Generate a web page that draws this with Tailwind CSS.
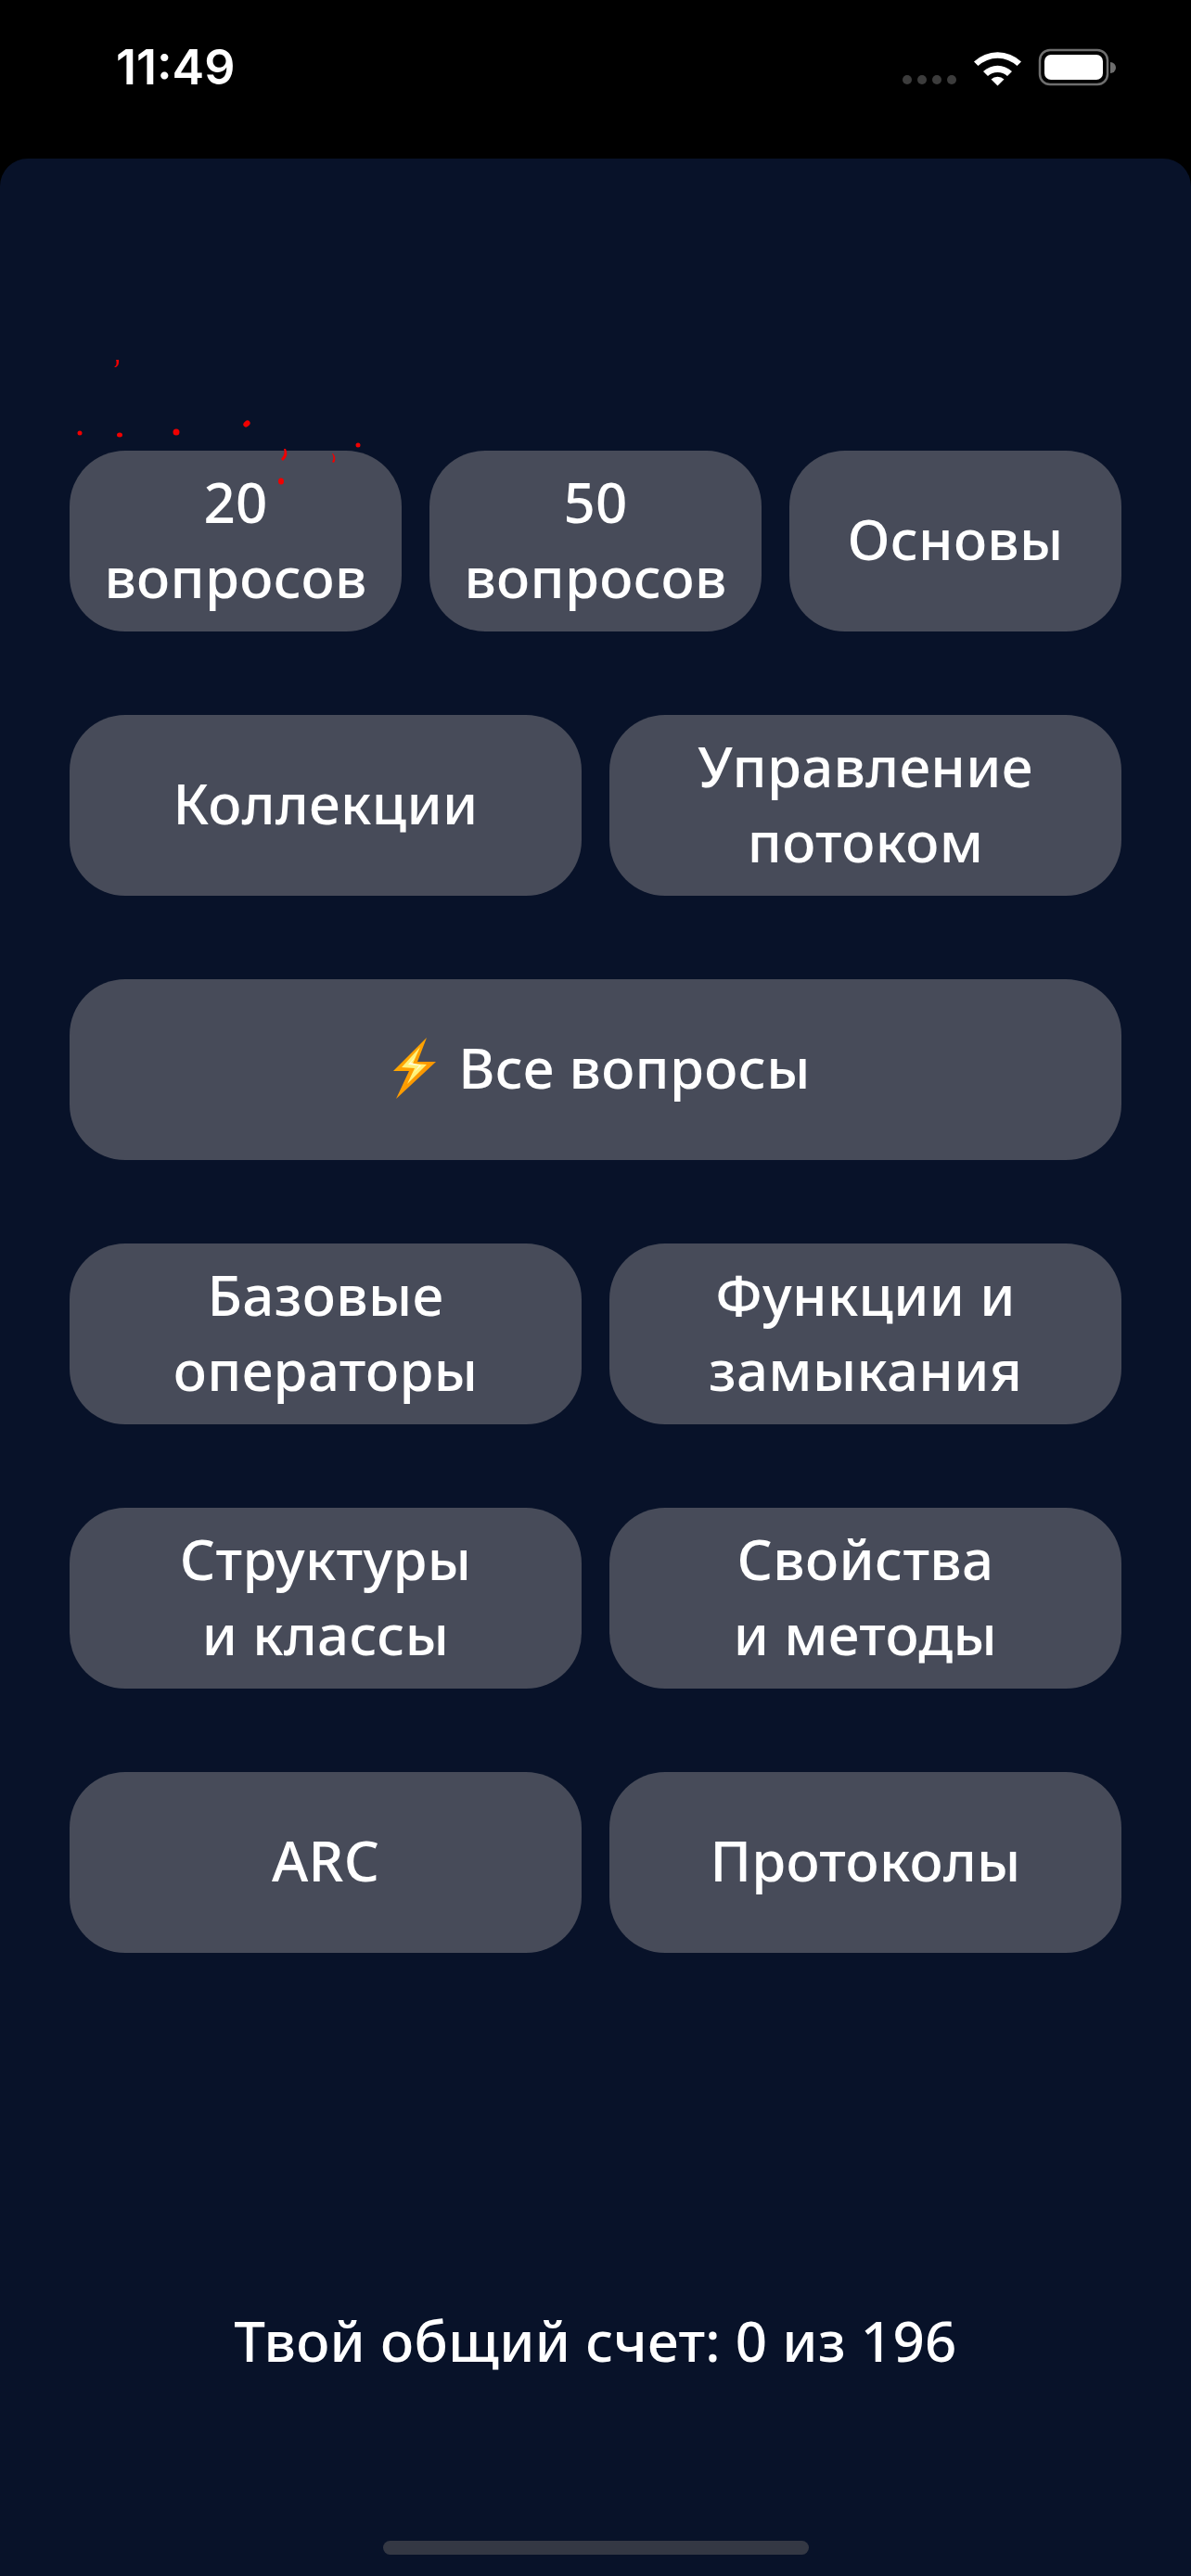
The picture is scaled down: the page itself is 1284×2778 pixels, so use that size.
<!DOCTYPE html>
<html lang="ru">
<head>
    <meta charset="UTF-8">
    <meta name="viewport" content="width=device-width, initial-scale=1.0">
    <title>Викторина</title>
    <script src="https://cdn.jsdelivr.net/npm/@tailwindcss/browser@4"></script>
</head>
<body class="bg-black font-['Noto_Sans',sans-serif] text-white">
<div class="relative w-[1284px] h-[2778px] flex flex-col overflow-hidden">

    <!-- status bar -->
    <div class="h-[171px] shrink-0 relative">
        <div class="absolute left-[125px] top-[43px] text-[52px] leading-[60px] font-semibold font-['Inter',sans-serif]">11:49</div>
        <svg class="absolute left-[970px] top-[50px]" width="240" height="46" viewBox="970 50 240 46">
            <circle cx="978" cy="86" r="5" fill="#3c3c3c"/>
            <circle cx="994" cy="86" r="5" fill="#3c3c3c"/>
            <circle cx="1010" cy="86" r="5" fill="#3c3c3c"/>
            <circle cx="1026" cy="86" r="5" fill="#3c3c3c"/>
            <path d="M1050 66.500 A37 37 0 0 1 1101 66.500 L1096.500 71 A31 31 0 0 0 1054.500 71Z" fill="#fff"/>
            <path d="M1060 77 A22.500 22.500 0 0 1 1091 77 L1086 82 A15.500 15.500 0 0 0 1065 82Z" fill="#fff"/>
            <path d="M1068.500 85.500 A10 10 0 0 1 1082.500 85.500 L1075.500 92.500Z" fill="#fff"/>
            <rect x="1121" y="54" width="73" height="37" rx="11" fill="none" stroke="#6e6e6e" stroke-width="2.500"/>
            <rect x="1126" y="59" width="63" height="27" rx="7" fill="#fff"/>
            <path d="M1197 67 A6 6 0 0 1 1197 79Z" fill="#6e6e6e"/>
        </svg>
    </div>

    <!-- main panel -->
    <div class="flex-1 bg-[#081229] rounded-t-[30px] px-[75px] pt-[315px] flex flex-col items-stretch">
        <div class="flex flex-col gap-[90px] text-[60px] leading-[81px] font-medium tracking-[0.3px] text-center">
            <div class="grid grid-cols-3 gap-[30px]">
                <button class="h-[195px] pb-1 rounded-[60px] bg-[#474b59]">20<br>вопросов</button>
                <button class="h-[195px] pb-1 rounded-[60px] bg-[#474b59]">50<br>вопросов</button>
                <button class="h-[195px] pb-1 rounded-[60px] bg-[#474b59]">Основы</button>
            </div>
            <div class="grid grid-cols-2 gap-[30px]">
                <button class="h-[195px] pb-1 rounded-[60px] bg-[#474b59]">Коллекции</button>
                <button class="h-[195px] pb-1 rounded-[60px] bg-[#474b59]">Управление<br>потоком</button>
            </div>
            <button class="h-[195px] pb-1 pl-[14px] rounded-[60px] bg-[#474b59] flex items-center justify-center gap-[24px]">
                <svg width="46" height="66" viewBox="0 0 46 66">
                    <defs>
                        <linearGradient id="bolt" x1="0" y1="0" x2="1" y2="1">
                            <stop offset="0" stop-color="#ffb300"/>
                            <stop offset="0.5" stop-color="#ff9d00"/>
                            <stop offset="1" stop-color="#f08a00"/>
                        </linearGradient>
                    </defs>
                    <path d="M36 0 L0 36 L17 36 L3 66 L46 26 L26 26Z" fill="url(#bolt)"/>
                    <path d="M29 10 L9 32 L23 33 L15 50 L36 29 L21 28Z" fill="#fff27a"/>
                    <path d="M24 20 L16 29 L28 30 L22 38 L30 30 L19 27Z" fill="#fffde0"/>
                </svg>
                <span>Все вопросы</span>
            </button>
            <div class="grid grid-cols-2 gap-[30px]">
                <button class="h-[195px] pb-1 rounded-[60px] bg-[#474b59]">Базовые<br>операторы</button>
                <button class="h-[195px] pb-1 rounded-[60px] bg-[#474b59]">Функции и<br>замыкания</button>
            </div>
            <div class="grid grid-cols-2 gap-[30px]">
                <button class="h-[195px] pb-1 rounded-[60px] bg-[#474b59]">Структуры<br>и классы</button>
                <button class="h-[195px] pb-1 rounded-[60px] bg-[#474b59]">Свойства<br>и методы</button>
            </div>
            <div class="grid grid-cols-2 gap-[30px]">
                <button class="h-[195px] pb-1 rounded-[60px] bg-[#474b59]">ARC</button>
                <button class="h-[195px] pb-1 rounded-[60px] bg-[#474b59]">Протоколы</button>
            </div>
        </div>

        <p class="mt-[378px] text-center text-[60px] leading-[81px] font-medium tracking-[0.3px]">Твой общий счет: 0 из 196</p>

        <div class="mt-[175px] mx-auto w-[459px] h-[15px] rounded-full bg-[#343844]"></div>
    </div>

    <!-- red specks over the top buttons -->
    <svg class="absolute inset-0 pointer-events-none" width="1284" height="2778" viewBox="0 0 1284 2778" fill="#f00000">
        <path d="M123 396 Q127 393 125 388 L128 388 Q129 393 125 396Z"/>
        <circle cx="86" cy="467" r="2.500"/>
        <ellipse cx="129" cy="469" rx="3" ry="2.500"/>
        <circle cx="190" cy="466" r="3.500"/>
        <ellipse cx="266" cy="457" rx="4" ry="3" transform="rotate(-40 266 457)"/>
        <path d="M306 484 L308 484 Q312 491 305 497 L303 495 Q308 490 306 484Z"/>
        <path d="M358 489 L359 489 Q363 494 360 499 L358 498 Q361 494 358 489Z"/>
        <circle cx="386" cy="480" r="2.500"/>
        <ellipse cx="303" cy="519" rx="3" ry="3.500"/>
    </svg>
</div>
</body>
</html>
